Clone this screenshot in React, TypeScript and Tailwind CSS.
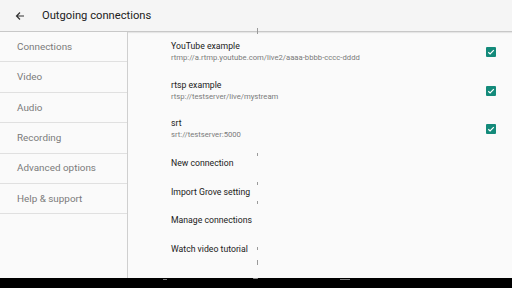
import React from "react";

const sideItems = ["Connections", "Video", "Audio", "Recording", "Advanced options", "Help & support"];

const conns = [
  { name: "YouTube example", url: "rtmp://a.rtmp.youtube.com/live2/aaaa-bbbb-cccc-dddd" },
  { name: "rtsp example", url: "rtsp://testserver/live/mystream" },
  { name: "srt", url: "srt://testserver:5000" },
];

const actions = ["New connection", "Import Grove setting", "Manage connections", "Watch video tutorial"];

function Check() {
  return (
    <div className="w-[10px] h-[10px] rounded-[1px] bg-[#138a7a] flex items-center justify-center">
      <svg width="8" height="8" viewBox="0 0 8 8" fill="none">
        <path d="M1.3 4.2 L3.1 5.9 L6.8 2.2" stroke="#ffffff" strokeWidth="1.2" />
      </svg>
    </div>
  );
}

export default function App() {
  const ticks = [
    { top: 28, h: 6 },
    { top: 153, h: 3 },
    { top: 182, h: 3 },
    { top: 201, h: 3 },
    { top: 247, h: 3 },
    { top: 260, h: 5 },
  ];
  return (
    <div
      className="relative w-[512px] h-[288px] flex flex-col bg-[#fafafa] overflow-hidden"
      style={{ fontFamily: "Roboto, 'Noto Sans', sans-serif" }}
    >
      <div className="h-[32px] shrink-0 bg-[#f5f5f5] border-b border-[#c8c8c8] flex items-center shadow-[0_1px_1px_rgba(0,0,0,0.08)]">
        <svg className="ml-[15px]" width="10" height="10" viewBox="0 0 10 10" fill="none">
          <path d="M9 5 H1.5 M5 1.5 L1.5 5 L5 8.5" stroke="#333" strokeWidth="1.2" />
        </svg>
        <span className="ml-[17px] text-[11.2px] text-[#212121] leading-none">Outgoing connections</span>
      </div>
      <div className="flex-1 flex min-h-0">
        <div className="w-[128px] shrink-0 border-r border-[#cfcfcf] bg-[#fafafa] flex flex-col">
          {sideItems.map((s) => (
            <div
              key={s}
              className="h-[30.4px] shrink-0 border-b border-[#e0e0e0] flex items-center pl-[17px] pt-[1px] text-[9.9px] text-[#7a7a7a]"
            >
              {s}
            </div>
          ))}
        </div>
        <div className="flex-1 flex flex-col pl-[43px] pr-[16px] pt-[1px]">
          {conns.map((c) => (
            <div key={c.name} className="h-[38.5px] shrink-0 flex items-center">
              <div className="flex-1 flex flex-col">
                <span className="text-[8.7px] leading-[11px] text-[#212121]">{c.name}</span>
                <span className="text-[7.7px] leading-[10px] text-[#7a7a7a] mt-[1px]">{c.url}</span>
              </div>
              <Check />
            </div>
          ))}
          {actions.map((a) => (
            <div key={a} className="h-[28.5px] shrink-0 flex items-center pt-[2px] text-[8.7px] text-[#212121]">
              {a}
            </div>
          ))}
        </div>
      </div>
      <div className="h-[10px] shrink-0 bg-black relative">
        <div className="absolute left-[163px] top-[1px] w-[4px] h-[1px] bg-[#777]" />
        <div className="absolute left-[253px] top-0 w-[5px] h-[1px] bg-[#888] rounded-full" />
        <div className="absolute left-[340px] top-[1px] w-[10px] h-[1px] bg-[#777]" />
      </div>
      {ticks.map((t, i) => (
        <div
          key={i}
          className="absolute left-[257px] w-[1px] bg-[#9a9a9a]"
          style={{ top: t.top, height: t.h }}
        />
      ))}
    </div>
  );
}
